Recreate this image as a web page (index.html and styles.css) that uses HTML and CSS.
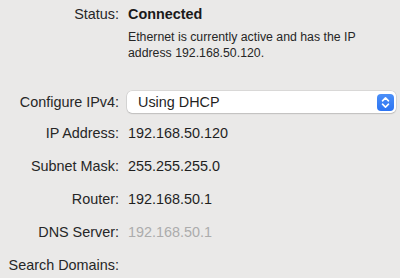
FILE: index.html
```html
<!DOCTYPE html>
<html>
<head>
<meta charset="utf-8">
<link rel="stylesheet" href="styles.css">
</head>
<body>
<div class="panel">
  <div class="row status-row">
    <div class="label">Status:</div>
    <div class="value bold">Connected</div>
  </div>
  <div class="row desc-row">
    <div class="label"></div>
    <div class="desc">Ethernet is currently active and has the IP<br>address 192.168.50.120.</div>
  </div>
  <div class="row popup-row">
    <div class="label">Configure IPv4:</div>
    <div class="popup">
      <span class="popup-text">Using DHCP</span>
      <span class="stepper">
        <svg width="17" height="17" viewBox="0 0 17 17">
          <path d="M5.5 6.8 L8.5 3.9 L11.5 6.8" fill="none" stroke="#fff" stroke-width="1.6" stroke-linecap="round" stroke-linejoin="round"/>
          <path d="M5.5 10.2 L8.5 13.1 L11.5 10.2" fill="none" stroke="#fff" stroke-width="1.6" stroke-linecap="round" stroke-linejoin="round"/>
        </svg>
      </span>
    </div>
  </div>
  <div class="row field ip">
    <div class="label">IP Address:</div>
    <div class="value">192.168.50.120</div>
  </div>
  <div class="row field">
    <div class="label">Subnet Mask:</div>
    <div class="value">255.255.255.0</div>
  </div>
  <div class="row field">
    <div class="label">Router:</div>
    <div class="value">192.168.50.1</div>
  </div>
  <div class="row field">
    <div class="label">DNS Server:</div>
    <div class="value dim">192.168.50.1</div>
  </div>
  <div class="row field">
    <div class="label">Search Domains:</div>
    <div class="value"></div>
  </div>
</div>
</body>
</html>
```
FILE: styles.css
```css
html, body {
  margin: 0;
  padding: 0;
  background: #eae9e8;
}
body {
  width: 400px;
  height: 278px;
  overflow: hidden;
  font-family: "Liberation Sans", Arial, sans-serif;
  font-size: 14.4px;
  color: #262626;
}
.panel {
  display: flex;
  flex-direction: column;
  padding-top: 6px;
}
.row {
  display: grid;
  grid-template-columns: 119px 1fr;
  column-gap: 9px;
  align-items: center;
  line-height: 16px;
}
.label {
  text-align: right;
  white-space: nowrap;
}
.value {
  color: #1f1f1f;
}
.bold {
  font-weight: bold;
  color: #1a1a1a;
}
.desc-row {
  margin-top: 7px;
}
.desc {
  font-size: 12.3px;
  line-height: 16px;
  color: #262626;
}
.popup-row {
  margin-top: 30px;
  margin-right: 4px;
}
.popup {
  height: 22px;
  background: #ffffff;
  border-radius: 5px;
  box-shadow: 0 0 0 0.5px rgba(0,0,0,0.14), 0 1px 1.5px rgba(0,0,0,0.12);
  display: flex;
  align-items: center;
  justify-content: space-between;
  padding-left: 11px;
  padding-right: 2px;
  margin-left: -1px;
}
.popup-text {
  color: #1f1f1f;
}
.stepper {
  width: 17px;
  height: 17px;
  border-radius: 4px;
  background: linear-gradient(#4b8ff8, #2c74f2);
  display: flex;
}
.field {
  margin-top: 17px;
}
.field.ip {
  margin-top: 12px;
}
.dim {
  color: #acacac;
}
```
